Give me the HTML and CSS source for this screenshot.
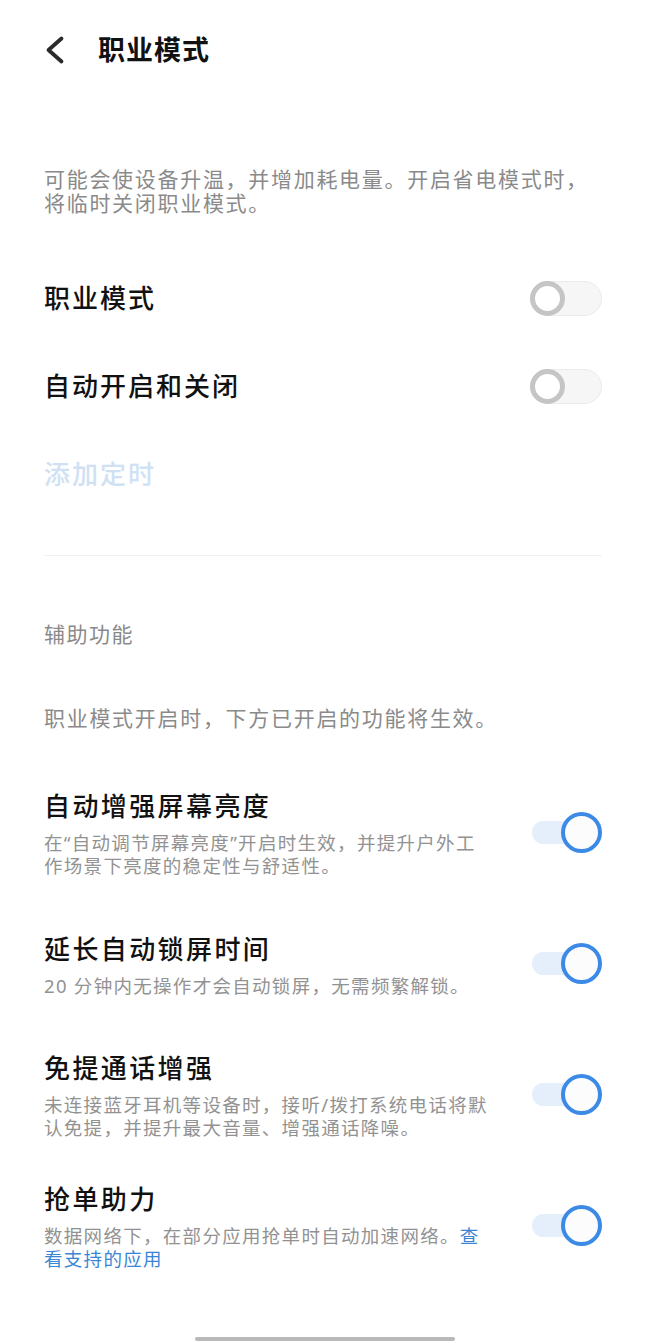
FILE: index.html
```html
<!DOCTYPE html>
<html lang="zh-CN">
<head>
    <meta charset="UTF-8">
    <meta name="viewport" content="width=device-width, initial-scale=1.0">
    <title>职业模式</title>
    <link rel="stylesheet" href="styles.css">
</head>
<body>
    <header class="topbar">
        <button class="back" aria-label="返回">
            <svg width="20" height="30" viewBox="0 0 20 30">
                <path d="M16.5 3.5 L3.5 15 L16.5 26.5" fill="none" stroke="#2b2b2b" stroke-width="3.8" stroke-linecap="round" stroke-linejoin="round"/>
            </svg>
        </button>
        <h1>职业模式</h1>
    </header>

    <main class="page">
        <p class="intro">可能会使设备升温，并增加耗电量。开启省电模式时，将临时关闭职业模式。</p>

        <div class="group">
            <div class="row">
                <span class="row-label">职业模式</span>
                <span class="switch"><span class="knob"></span></span>
            </div>
            <div class="row">
                <span class="row-label">自动开启和关闭</span>
                <span class="switch"><span class="knob"></span></span>
            </div>
            <div class="row">
                <span class="row-label disabled">添加定时</span>
            </div>
        </div>

        <hr class="divider">

        <div class="section-title">辅助功能</div>
        <p class="section-note">职业模式开启时，下方已开启的功能将生效。</p>

        <!-- 辅助功能列表 -->
        <div class="feature">
            <div class="feature-text">
                <div class="feature-title">自动增强屏幕亮度</div>
                <div class="feature-desc">在“自动调节屏幕亮度”开启时生效，并提升户外工作场景下亮度的稳定性与舒适性。</div>
            </div>
            <span class="switch on"><span class="knob"></span></span>
        </div>
        <div class="feature">
            <div class="feature-text">
                <div class="feature-title">延长自动锁屏时间</div>
                <div class="feature-desc">20 分钟内无操作才会自动锁屏，无需频繁解锁。</div>
            </div>
            <span class="switch on"><span class="knob"></span></span>
        </div>
        <div class="feature">
            <div class="feature-text">
                <div class="feature-title">免提通话增强</div>
                <div class="feature-desc">未连接蓝牙耳机等设备时，接听/拨打系统电话将默认免提，并提升最大音量、增强通话降噪。</div>
            </div>
            <span class="switch on"><span class="knob"></span></span>
        </div>
        <div class="feature">
            <div class="feature-text">
                <div class="feature-title">抢单助力</div>
                <div class="feature-desc">数据网络下，在部分应用抢单时自动加速网络。<a href="#" class="link">查看支持的应用</a></div>
            </div>
            <span class="switch on"><span class="knob"></span></span>
        </div>
    </main>

    <div class="home-bar"></div>
</body>
</html>
```

FILE: styles.css
```css
body {
    margin: 0;
    background-color: #fff;
    color: #111;
    font-family: "Noto Sans", "Noto Sans CJK SC", sans-serif;
}
.topbar {
    height: 100px;
    display: flex;
    align-items: center;
    padding-left: 45px;
}
.back {
    border: none;
    background: none;
    padding: 0;
    width: 20px;
    height: 30px;
    display: flex;
}
.topbar h1 {
    margin: 0 0 0 33px;
    font-size: 27px;
    font-weight: 700;
    letter-spacing: 1px;
    line-height: 36px;
}
.page {
    padding: 0 45px 0 44px;
}
.intro {
    margin: 67px 0 0;
    font-size: 21px;
    letter-spacing: 1.7px;
    line-height: 24px;
    color: #8a8a8a;
}
.group {
    margin-top: 39px;
}
.row {
    height: 88px;
    display: flex;
    align-items: center;
    justify-content: space-between;
}
.row-label {
    font-size: 26px;
    font-weight: 500;
    letter-spacing: 2px;
    line-height: 36px;
}
.row-label.disabled {
    color: #cfe1f3;
}
.divider {
    margin: 37px 0 0;
    border: none;
    border-top: 1px solid #f0f0f0;
}
.section-title {
    margin-top: 63px;
    font-size: 21px;
    letter-spacing: 1.5px;
    line-height: 30px;
    color: #8a8a8a;
}
.section-note {
    margin: 54px 0 0;
    font-size: 21px;
    letter-spacing: 1.7px;
    line-height: 30px;
    color: #8a8a8a;
}
.section-note + .feature {
    margin-top: 34px;
}
.feature {
    height: 131px;
    display: flex;
    align-items: center;
}
.feature-text {
    flex: 1;
}
.feature-title {
    font-size: 26px;
    font-weight: 500;
    letter-spacing: 2.4px;
    line-height: 36px;
}
.feature-desc {
    margin-top: 7px;
    font-size: 18.5px;
    letter-spacing: 1.3px;
    line-height: 23px;
    color: #929292;
}
.link {
    color: #3a86d6;
    text-decoration: none;
}
/* 开关 */
.switch {
    position: relative;
    flex-shrink: 0;
    width: 72px;
    height: 35px;
    box-sizing: border-box;
    border: 1px solid #ebebeb;
    border-radius: 18px;
    background-color: #f6f6f6;
}
.knob {
    position: absolute;
    left: -1px;
    top: -1px;
    width: 35px;
    height: 35px;
    box-sizing: border-box;
    border: 5px solid #c5c5c5;
    border-radius: 50%;
    background-color: #fff;
}
.switch.on {
    width: 70px;
    height: 23px;
    margin-left: 38px;
    border: none;
    border-radius: 12px;
    background-color: #e4effb;
}
.switch.on .knob {
    left: auto;
    right: 0;
    top: -9px;
    width: 41px;
    height: 41px;
    border: 4.5px solid #3b8ae5;
    background-color: #fcfcfc;
}
.home-bar {
    width: 260px;
    height: 4px;
    margin: 46px 0 0 195px;
    border-radius: 2px;
    background-color: #b9b9b9;
}
```
